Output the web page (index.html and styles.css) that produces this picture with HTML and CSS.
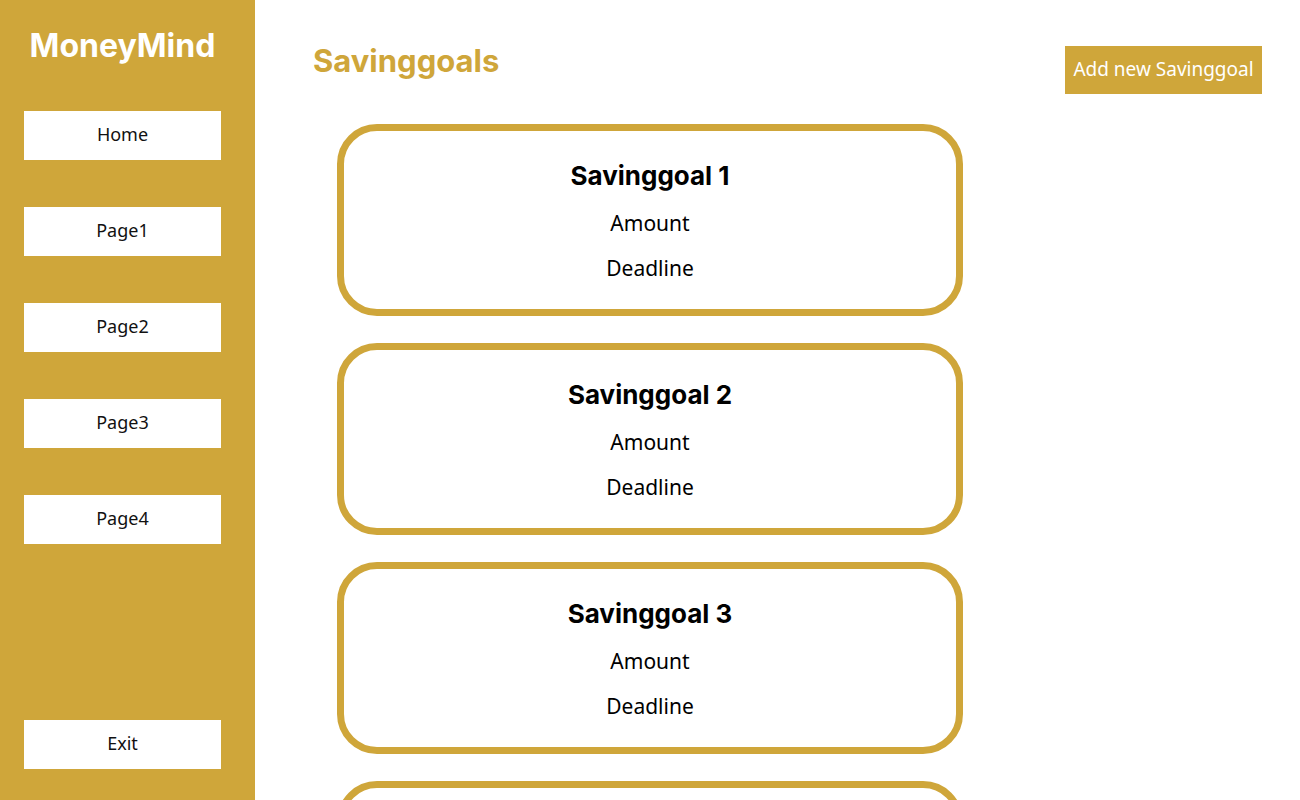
FILE: index.html
```html
<!DOCTYPE html>
<html>
<head>
<meta charset="utf-8">
<link rel="stylesheet" href="styles.css">
</head>
<body>
<div class="app">
  <aside class="sidebar">
    <div class="brand">MoneyMind</div>
    <nav class="nav">
      <a class="nav-btn">Home</a>
      <a class="nav-btn">Page1</a>
      <a class="nav-btn">Page2</a>
      <a class="nav-btn">Page3</a>
      <a class="nav-btn">Page4</a>
    </nav>
    <a class="nav-btn exit">Exit</a>
  </aside>
  <main class="main">
    <header class="header">
      <h1 class="title">Savinggoals</h1>
      <button class="add-btn">Add new Savinggoal</button>
    </header>
    <section class="cards">
      <div class="card"><div class="card-title">Savinggoal 1</div><div class="card-line">Amount</div><div class="card-line">Deadline</div></div>
      <div class="card"><div class="card-title">Savinggoal 2</div><div class="card-line">Amount</div><div class="card-line">Deadline</div></div>
      <div class="card"><div class="card-title">Savinggoal 3</div><div class="card-line">Amount</div><div class="card-line">Deadline</div></div>
      <div class="card"></div>
    </section>
  </main>
</div>
</body>
</html>
```
FILE: styles.css
```css
* { box-sizing: border-box; }
html, body { margin: 0; padding: 0; }
body {
  font-family: "Inter", "Noto Sans", sans-serif;
  background: #ffffff;
  color: #000;
  overflow: hidden;
}
.app {
  display: flex;
  height: 800px;
  overflow: hidden;
}
.sidebar {
  width: 255px;
  flex: none;
  background: #cfa63a;
  display: flex;
  flex-direction: column;
  padding: 26px 34px 31px 24px;
}
.brand {
  color: #fff;
  font-weight: 700;
  font-size: 32px;
  line-height: 40px;
  text-align: center;
  width: 197px;
}
.nav {
  display: flex;
  flex-direction: column;
  gap: 47px;
  margin-top: 45px;
}
.nav-btn {
  display: flex;
  align-items: center;
  justify-content: center;
  width: 197px;
  height: 49px;
  padding-bottom: 4px;
  background: #fff;
  font-family: "Noto Sans", sans-serif;
  font-size: 18px;
  color: #111;
}
.exit { margin-top: auto; }
.main {
  flex: 1;
  display: flex;
  flex-direction: column;
  padding: 0 38px 0 58px;
}
.header {
  display: flex;
  justify-content: space-between;
  align-items: flex-start;
}
.title {
  margin: 40px 0 0 0;
  font-size: 31px;
  line-height: 42px;
  font-weight: 700;
  color: #cfa63a;
}
.add-btn {
  margin-top: 46px;
  width: 197px;
  height: 48px;
  border: none;
  background: #cfa63a;
  color: #fff;
  font-family: "Noto Sans", sans-serif;
  font-size: 19px;
  padding: 0 0 2px 0;
}
.cards {
  display: flex;
  flex-direction: column;
  gap: 27px;
  margin-top: 30px;
  margin-left: 24px;
}
.card {
  width: 626px;
  height: 192px;
  flex: none;
  border: 7px solid #cfa63a;
  border-radius: 40px;
  display: flex;
  flex-direction: column;
  align-items: center;
  padding-top: 29px;
}
.card-title {
  font-weight: 700;
  font-size: 26px;
  line-height: 32px;
}
.card-line {
  font-family: "Noto Sans", sans-serif;
  font-size: 21px;
  line-height: 28px;
  margin-top: 17px;
}
```
